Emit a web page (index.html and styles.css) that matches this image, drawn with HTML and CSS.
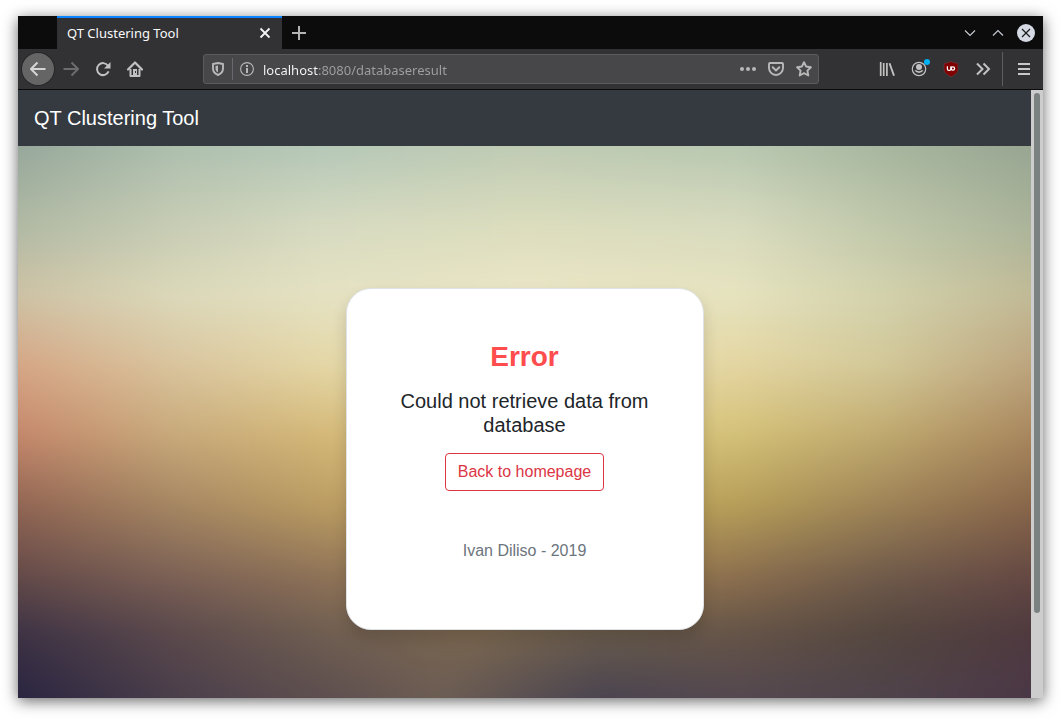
FILE: index.html
```html
<!DOCTYPE html>
<html lang="en">
<head>
<meta charset="utf-8">
<meta name="viewport" content="width=device-width, initial-scale=1">
<title>QT Clustering Tool</title>
<link rel="stylesheet" href="styles.css">
</head>
<body>
<div class="window">
  <header class="tabstrip">
    <div class="tab">
      <span class="tab-title">QT Clustering Tool</span>
      <button class="tab-close" type="button" aria-label="Close tab"><svg width="16" height="16" viewBox="0 0 16 16"><path d="M3.500 3.500l9 9M12.500 3.500l-9 9" stroke="#f4f4f4" stroke-width="1.800" fill="none"/></svg></button>
    </div>
    <button class="tab-new" type="button" aria-label="New tab"><svg width="16" height="16" viewBox="0 0 16 16"><path d="M8 1v14M1 8h14" stroke="#b4b4b4" stroke-width="2" fill="none"/></svg></button>
    <div class="window-controls">
      <button class="window-button" type="button" aria-label="Minimize"><svg width="18" height="18" viewBox="0 0 18 18"><path d="M4 6.500l5 5 5-5" stroke="#c4cad0" stroke-width="1.200" fill="none"/></svg></button>
      <button class="window-button" type="button" aria-label="Maximize"><svg width="18" height="18" viewBox="0 0 18 18"><path d="M4 11.500l5-5 5 5" stroke="#c4cad0" stroke-width="1.200" fill="none"/></svg></button>
      <button class="window-button" type="button" aria-label="Close window"><svg width="18" height="18" viewBox="0 0 18 18"><circle cx="9" cy="9" r="9" fill="#d5dae5"/><path d="M5 5l8 8M13 5l-8 8" stroke="#181a1c" stroke-width="1.200" fill="none"/></svg></button>
    </div>
  </header>
  <nav class="toolbar" aria-label="Browser">
    <button class="tool back" type="button" aria-label="Back"><svg width="16" height="16" viewBox="0 0 16 16"><path d="M15.500 8H1.500M7.500 1.500L1 8l6.500 6.500" stroke="#d4d4d4" stroke-width="2" fill="none"/></svg></button>
    <button class="tool forward" type="button" aria-label="Forward"><svg width="16" height="16" viewBox="0 0 16 16"><path d="M.500 8h14M8.500 1.500L15 8l-6.500 6.500" stroke="#6c6c6d" stroke-width="2" fill="none"/></svg></button>
    <button class="tool" type="button" aria-label="Reload"><svg width="16" height="16" viewBox="0 0 16 16"><path d="M13.600 10.400A6 6 0 1 1 13 4.700" stroke="#c2c2c2" stroke-width="2" fill="none"/><path d="M15.500 1v6.500H9z" fill="#c2c2c2"/></svg></button>
    <button class="tool" type="button" aria-label="Home"><svg width="16" height="16" viewBox="0 0 16 16"><path d="M1 8.500L8 1.500l7 7" stroke="#c2c2c2" stroke-width="2.200" fill="none" stroke-linecap="round" stroke-linejoin="round"/><path d="M3.500 8v7h9V8" stroke="#c2c2c2" stroke-width="2" fill="none" stroke-linejoin="round"/><path d="M6 8h4v7H6z" fill="#c2c2c2"/><path d="M8 10h1v2H8z" fill="#323234"/></svg></button>
    <div class="urlbar">
      <button class="url-icon" type="button" aria-label="Tracking protection"><svg width="14" height="14" viewBox="0 0 14 14"><path d="M7 1l5 1v4.500c0 3-2 5.300-5 6.500-3-1.200-5-3.500-5-6.500V2z" stroke="#b8b8b9" stroke-width="1.900" fill="none" stroke-linejoin="round"/><path d="M7 3.500v7C5.300 9.500 4.500 8.300 4.500 6.500V4z" fill="#b8b8b9"/></svg></button>
      <span class="url-divider"></span>
      <button class="url-icon" type="button" aria-label="Site information"><svg width="14" height="14" viewBox="0 0 14 14"><circle cx="7" cy="7" r="6.400" stroke="#b8b8b9" stroke-width="1.100" fill="none"/><path d="M6 3h2v2H6zM6 6h2v5H6z" fill="#b8b8b9"/></svg></button>
      <input class="url-input" type="text" aria-label="Address" value="localhost:8080/databaseresult">
      <button class="url-icon" type="button" aria-label="Page actions"><svg width="16" height="16" viewBox="0 0 16 16"><g fill="#b8b8b9"><circle cx="2" cy="8" r="2"/><circle cx="8" cy="8" r="2"/><circle cx="14" cy="8" r="2"/></g></svg></button>
      <button class="url-icon" type="button" aria-label="Save to Pocket"><svg width="16" height="16" viewBox="0 0 16 16"><path d="M2 2h12q1 0 1 1v4a7 7 0 0 1-14 0V3q0-1 1-1z" stroke="#b8b8b9" stroke-width="1.900" fill="none"/><path d="M4.700 6.300L8 9.500l3.300-3.200" stroke="#b8b8b9" stroke-width="2" fill="none" stroke-linecap="round" stroke-linejoin="round"/></svg></button>
      <button class="url-icon" type="button" aria-label="Bookmark"><svg width="16" height="16" viewBox="0 0 16 16"><path d="M8 1.200l2.100 4.300 4.800.700-3.500 3.400.900 4.900L8 12.200l-4.300 2.300.900-4.900L1.100 6.200l4.800-.700z" stroke="#b8b8b9" stroke-width="1.900" fill="none" stroke-linejoin="round"/></svg></button>
    </div>
    <button class="tool" type="button" aria-label="Library"><svg width="16" height="16" viewBox="0 0 16 16"><path d="M1.700 1v14M4.700 2v13M7.900 2v13" stroke="#c2c2c2" stroke-width="1.700" fill="none"/><path d="M10.500 2.300L15 14.700" stroke="#c2c2c2" stroke-width="1.900" fill="none"/></svg></button>
    <button class="tool account" type="button" aria-label="Account"><svg width="16" height="16" viewBox="0 0 16 16"><circle cx="8" cy="8" r="6.700" stroke="#c2c2c2" stroke-width="1.200" fill="none"/><circle cx="8" cy="6" r="3" fill="#c2c2c2"/><path d="M3.500 9.300h2q2.500 2 5 0h2a5 5 0 0 1-9 0z" fill="#c2c2c2"/></svg><span class="badge"></span></button>
    <button class="tool" type="button" aria-label="Content blocker"><svg width="16" height="16" viewBox="0 0 16 16"><path d="M8 .300c2 1.400 4.700 1.900 7 1.900v5.600c0 4-3 6.200-7 7.900-4-1.700-7-3.900-7-7.900V2.200C3.300 2.200 6 1.700 8 .300z" fill="#800000" stroke="#6a4543" stroke-width=".600"/><path d="M4.400 5.200v2.700q0 1.500 1.500 1.500h.500q1.500 0 1.500-1.500V5.200" stroke="#fff" stroke-width="1.300" fill="none"/><circle cx="9.900" cy="7.500" r="1.700" stroke="#fff" stroke-width="1.300" fill="none"/></svg></button>
    <button class="tool" type="button" aria-label="More tools"><svg width="16" height="16" viewBox="0 0 16 16"><path d="M2 2.500L7.500 8 2 13.500M8.500 2.500L14 8l-5.500 5.500" stroke="#c2c2c2" stroke-width="2" fill="none"/></svg></button>
    <span class="tool-divider"></span>
    <button class="tool" type="button" aria-label="Menu"><svg width="16" height="16" viewBox="0 0 16 16"><path d="M2 3h12M2 8h12M2 13h12" stroke="#c8c8c8" stroke-width="2" fill="none"/></svg></button>
  </nav>
  <div class="viewport">
    <div class="page">
      <div class="navbar"><a class="brand" href="#">QT Clustering Tool</a></div>
      <main class="hero">
        <div class="backdrop" aria-hidden="true">
          <div class="band band-1"></div>
          <div class="band band-2"></div>
          <div class="band band-3"></div>
          <div class="band band-4"></div>
          <div class="band band-5"></div>
          <div class="band band-6"></div>
          <div class="band band-7"></div>
          <div class="band band-8"></div>
          <div class="band band-9"></div>
        </div>
        <section class="card">
          <h1 class="card-title">Error</h1>
          <p class="card-message">Could not retrieve data from database</p>
          <a class="button" href="#">Back to homepage</a>
          <p class="card-footer">Ivan Diliso - 2019</p>
        </section>
      </main>
    </div>
    <div class="scrollbar"><div class="thumb"></div></div>
  </div>
</div>
</body>
</html>
```

FILE: styles.css
```css
* { box-sizing: border-box; }

body {
  margin: 0;
  min-height: 100vh;
  padding: 16px 18px 20px;
  display: flex;
  background: #fff;
  font-family: "Liberation Sans", Arial, sans-serif;
}

button {
  margin: 0;
  padding: 0;
  border: 0;
  background: none;
  display: flex;
  align-items: center;
  justify-content: center;
  flex: none;
}

svg { display: block; }

.window {
  flex: 1;
  min-width: 0;
  display: flex;
  flex-direction: column;
  box-shadow: 0 3px 14px rgba(0, 0, 0, 0.6);
}

/* Tabs */
.tabstrip {
  height: 33px;
  padding-left: 39px;
  display: flex;
  background: #0c0c0d;
}

.tab {
  width: 225px;
  padding: 0 9px 0 10px;
  display: flex;
  align-items: center;
  justify-content: space-between;
  background: #323234;
  box-shadow: inset 0 2px #0a84ff;
}

.tab-title {
  font: 13px/18px "Noto Sans", sans-serif;
  color: #f9f9fa;
}

.tab-close { padding-top: 1px; }

.tab-new { width: 34px; }

.window-controls {
  margin-left: auto;
  padding-right: 8px;
  display: flex;
  align-items: center;
  gap: 10px;
}

/* Toolbar */
.toolbar {
  height: 41px;
  padding: 0 3px 0 4px;
  display: flex;
  align-items: center;
  background: #323234;
  border-bottom: 1px solid #0c0c0d;
}

.tool {
  width: 32px;
  height: 32px;
}

.back {
  border-radius: 50%;
  background: #656566;
  box-shadow: 0 0 0 1px #272728;
}

.forward { margin-left: 1px; }

.account { position: relative; }

.badge {
  position: absolute;
  top: 6px;
  right: 5px;
  width: 6px;
  height: 6px;
  border-radius: 50%;
  background: #00b3f4;
}

.tool-divider {
  width: 1px;
  height: 34px;
  margin: 0 5px 0 3px;
  background: #5c5c61;
}

.urlbar {
  flex: 1;
  min-width: 0;
  height: 30px;
  margin: 0 52px;
  display: flex;
  align-items: center;
  background: #474749;
  border: 1px solid #5b5b5e;
  border-radius: 3px;
}

.url-icon {
  width: 28px;
  height: 28px;
}

.url-divider {
  width: 1px;
  height: 22px;
  background: #68686f;
}

.url-input {
  flex: 1;
  min-width: 0;
  height: 18px;
  margin: 2px 0 0 2px;
  padding: 0;
  border: 0;
  outline: 0;
  font: 13px/18px "Noto Sans", sans-serif;
  color: transparent;
  background: linear-gradient(90deg, #f9f9fa 55px, #a0a0a1 55px);
  -webkit-background-clip: text;
  background-clip: text;
}

/* Page */
.viewport {
  flex: 1;
  display: flex;
}

.page {
  flex: 1;
  min-width: 0;
  display: flex;
  flex-direction: column;
}

.navbar {
  padding: 13px 16px;
  background: #343a40;
}

.brand {
  display: block;
  font-size: 20px;
  line-height: 30px;
  color: #fff;
  text-decoration: none;
}

.hero {
  flex: 1;
  position: relative;
  overflow: hidden;
  padding: 142px 16px 64px;
  display: flex;
  justify-content: center;
  align-items: flex-start;
}

.backdrop {
  position: absolute;
  inset: -24px;
  padding: 24px;
  filter: blur(10px);
}

.band {
  position: absolute;
  inset: 0;
}

.band-1 { background: linear-gradient(90deg, #93a498, #adbfae 17%, #b5c8b8 31%, #c0cbb4 50%, #b8c8b1 70%, #a7b69f 84%, #95a390); }
.band-2 { background: linear-gradient(90deg, #afb8a2, #c9cdb5 17%, #d8dbc1 31%, #dddebe 50%, #dadcbf 70%, #c1c8ab 84%, #a9b298); }
.band-3 { background: linear-gradient(90deg, #ccbfa2, #dcd9ba 17%, #e5e2c3 31%, #ebe6c7 50%, #e6e3bf 70%, #d3d2ad 84%, #bfb793); }
.band-4 { background: linear-gradient(90deg, #d5a181, #d9c39c 17%, #e4d6a4 31%, #e8dfb4 50%, #e4d5a0 70%, #d2c797 84%, #b99e79); }
.band-5 { background: linear-gradient(90deg, #c5836a, #c8aa7b 17%, #d4b878 31%, #e0ca8b 50%, #d4c178 70%, #c0a96f 84%, #a5825b); }
.band-6 { background: linear-gradient(90deg, #8e6051, #a58662 17%, #ba9c62 31%, #c5a665 50%, #b69e58 70%, #9d8256 84%, #846148); }
.band-7 { background: linear-gradient(90deg, #5f4647, #7b6055 17%, #8d7157 31%, #a08358 50%, #8b6e4e 70%, #6e594a 84%, #624542); }
.band-8 { background: linear-gradient(90deg, #3a3044, #5b494c 17%, #6f5e51 31%, #7b6750 45%, #685b4d 57%, #655447 70%, #54463f 84%, #4e383f); }
.band-9 { background: linear-gradient(90deg, #25213f, #4a3e4b 17%, #5d4e4f 31%, #6c5d54 42%, #4a4450 57%, #544850 70%, #4f434b 84%, #4a3646); }

.band-2 { mask-image: linear-gradient(transparent 4%, #000 18%); }
.band-3 { mask-image: linear-gradient(transparent 18%, #000 29%); }
.band-4 { mask-image: linear-gradient(transparent 29%, #000 41%); }
.band-5 { mask-image: linear-gradient(transparent 41%, #000 52%); }
.band-6 { mask-image: linear-gradient(transparent 52%, #000 64%); }
.band-7 { mask-image: linear-gradient(transparent 64%, #000 76%); }
.band-8 { mask-image: linear-gradient(transparent 76%, #000 85%); }
.band-9 { mask-image: linear-gradient(transparent 85%, #000 96%); }

.card {
  position: relative;
  width: 100%;
  max-width: 358px;
  padding: 51px 48px 66px;
  text-align: center;
  background: #fff;
  border: 1px solid #dee2e6;
  border-radius: 25px;
  box-shadow: 0 8px 16px rgba(0, 0, 0, 0.15);
}

.card-title {
  margin: 0 0 16px;
  font-size: 28px;
  line-height: 33px;
  font-weight: 700;
  color: #ff4c4c;
}

.card-message {
  margin: 0 0 16px;
  font-size: 20px;
  line-height: 24px;
  color: #212529;
}

.button {
  display: inline-block;
  padding: 6px 12px;
  border: 1px solid #dc3545;
  border-radius: 4px;
  font-size: 16px;
  line-height: 24px;
  color: #dc3545;
  text-decoration: none;
  vertical-align: top;
}

.card-footer {
  margin: 48px 0 0;
  font-size: 16px;
  line-height: 24px;
  color: #6c757d;
}

.scrollbar {
  width: 12px;
  padding: 3px 3px 0;
  background: #cdcdcd;
}

.thumb {
  height: 86%;
  border-radius: 3px;
  background: #7b8080;
}
```
